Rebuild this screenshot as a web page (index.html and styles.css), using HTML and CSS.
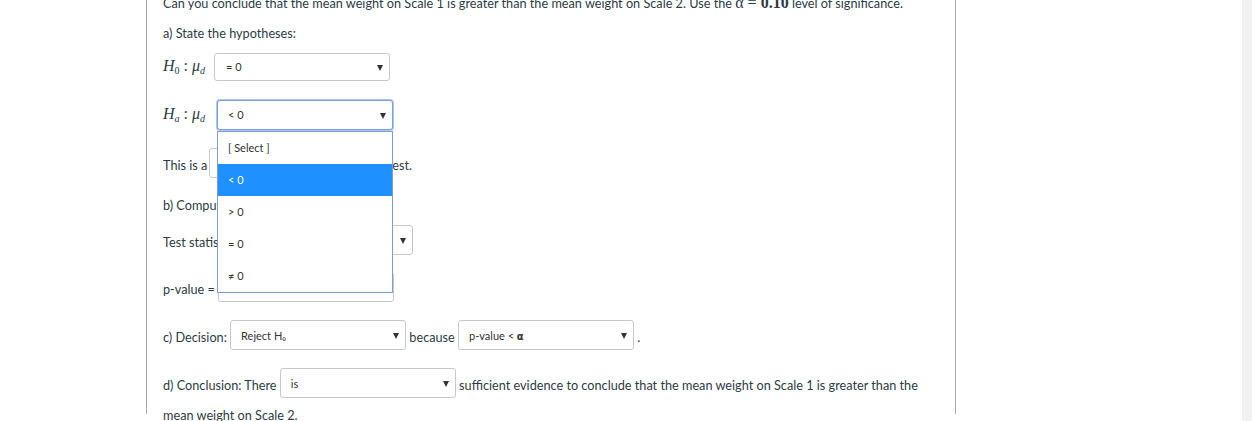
FILE: index.html
```html
<!DOCTYPE html>
<html>
<head>
<meta charset="utf-8">
<title>Hypothesis test</title>
<link rel="stylesheet" href="styles.css">
</head>
<body>
<div class="page">
  <div class="panel">
    <p class="row r1">Can you conclude that the mean weight on Scale 1 is greater than the mean weight on Scale 2. Use the <span class="math">α = <b>0.10</b></span> level of significance.</p>
    <p class="row r2">a) State the hypotheses:</p>
    <div class="hrow r3"><span class="math hyp h0"><i>H</i><sub>0</sub> : <i>μ</i><sub><i>d</i></sub></span><span class="sel sel-h0">= 0</span></div>
    <div class="hrow r4"><span class="math hyp ha"><i>H</i><sub><i>a</i></sub> : <i>μ</i><sub><i>d</i></sub></span><span class="sel focus">&lt; 0
      <span class="menu">
        <span class="opt">[ Select ]</span>
        <span class="opt active">&lt; 0</span>
        <span class="opt">&gt; 0</span>
        <span class="opt">= 0</span>
        <span class="opt">≠ 0</span>
      </span>
    </span></div>
    <p class="srow r5">This is a <span class="sel sel-tail">right-tailed</span> test.</p>
    <p class="row r6">b) Compute the test statistic.</p>
    <p class="srow r7">Test statistic = <span class="sel sel-stat"></span></p>
    <p class="srow r8">p-value = <span class="sel input"></span></p>
    <p class="srow r9">c) Decision: <span class="sel">Reject H₀</span> because <span class="sel">p-value &lt; <b>α</b></span> .</p>
    <p class="srow r10">d) Conclusion: There <span class="sel">is</span> sufficient evidence to conclude that the mean weight on Scale 1 is greater than the mean weight on Scale 2.</p>
  </div>
</div>
<div class="gutter"></div>
</body>
</html>
```

FILE: styles.css
```css
* { box-sizing: border-box; }
html, body { margin: 0; height: 100%; }
body {
  display: flex;
  overflow: hidden;
  background: #fff;
  color: #2d3b45;
  font-family: Lato, "Liberation Sans", sans-serif;
  font-size: 12.7px;
}
.page { flex: 1; height: 100%; }
.gutter { width: 10px; height: 100%; background: #f1f1f1; }
.panel {
  margin-left: 146px;
  width: 810px;
  height: 100%;
  border-left: 1px solid #a9a9a9;
  border-right: 1px solid #a9a9a9;
  padding: 0 16px;
}

/* plain text rows */
.row { margin: 0; line-height: 20px; height: 20px; white-space: nowrap; }
/* hypothesis rows */
.hrow { display: flex; align-items: center; }
/* sentence rows holding selects */
.srow { margin: 0; line-height: 30px; white-space: nowrap; }
.srow .sel { vertical-align: top; margin-top: -2px; line-height: 29px; }

.r1 { margin-top: -7px; }
.r2 { margin-top: 10px; }
.r3 { margin-top: 10px; height: 28px; }
.r4 { margin-top: 19px; height: 30px; }
.r5 { margin-top: 20px; height: 30px; }
.r6 { margin-top: 15px; }
.r7 { margin-top: 12px; height: 30px; }
.r8 { margin-top: 17px; height: 30px; }
.r9 { margin-top: 18px; height: 30px; }
.r10 { margin-top: 18px; white-space: normal; }

.math { font-family: "Liberation Serif", "DejaVu Serif", serif; font-size: 16px; }
.math b { font-weight: bold; }
.math sub { font-size: 10px; vertical-align: -3px; }
.hyp { line-height: 20px; padding-top: 2px; }
.h0 { width: 51px; }
.ha { width: 54px; }

.sel {
  position: relative;
  display: inline-block;
  width: 176px;
  height: 30px;
  line-height: 28px;
  padding: 0 10px;
  border: 1px solid #c8c8c8;
  border-radius: 3px;
  background: #fff;
  font-size: 11px;
  color: #333;
  text-align: left;
}
.sel-h0 { height: 28px; line-height: 26px; padding-left: 11px; }
.sel::after {
  content: "";
  position: absolute;
  right: 6px;
  top: 12px;
  border-left: 3.5px solid transparent;
  border-right: 3.5px solid transparent;
  border-top: 6px solid #333;
}
.sel-h0::after { top: 11px; }
.sel b { font-family: "DejaVu Sans", sans-serif; font-size: 10px; }
.sel.focus { border-color: #7ba0de; box-shadow: 0 0 0 1px #aec5ee; }
.srow .sel-tail { margin-left: -2px; }
.sel-stat { width: 167px; }
.input::after { display: none; }

.menu {
  position: absolute;
  left: -1px;
  top: 30px;
  width: 176px;
  height: 162px;
  border: 1px solid #7f9ddb;
  background: #fff;
  z-index: 5;
}
.opt {
  display: block;
  height: 32px;
  line-height: 32px;
  padding-left: 10px;
  font-size: 11px;
  color: #333;
}
.opt.active { background: #1e90ff; color: #fff; }
```
